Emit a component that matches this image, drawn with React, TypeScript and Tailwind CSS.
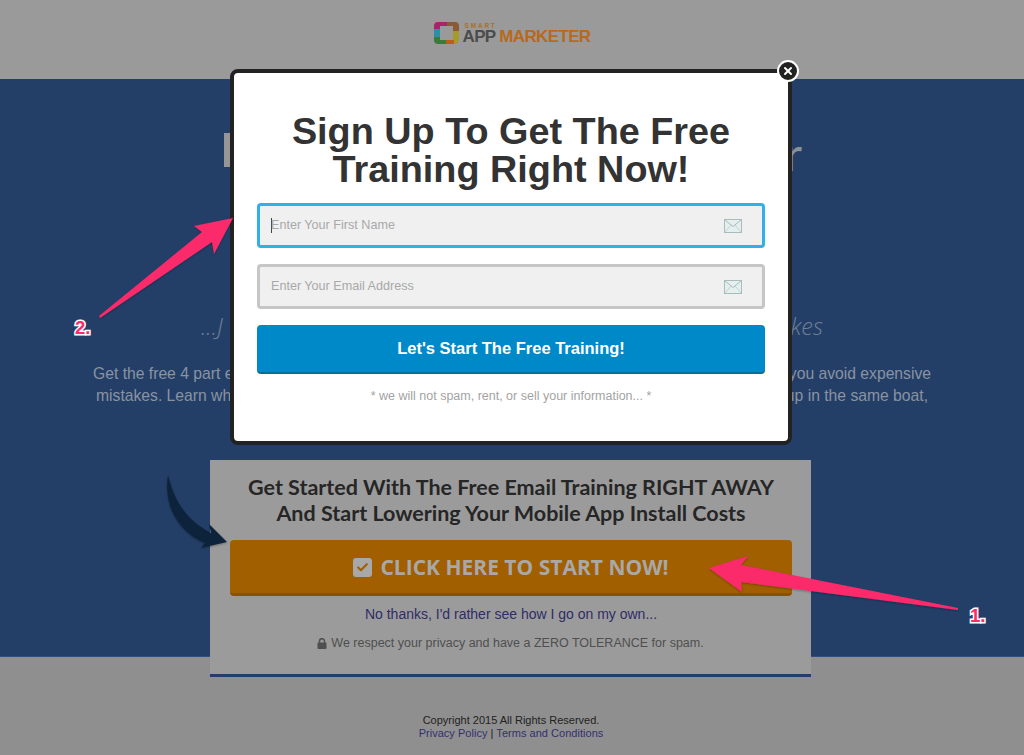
import { Check, X } from 'lucide-react'

function MailIcon() {
  return (
    <svg width="18" height="14" viewBox="0 0 18 14" className="shrink-0">
      <rect x="0.5" y="0.5" width="17" height="13" fill="#e4efee" stroke="#a9bcbc" />
      <path d="M1 1l8 6.5L17 1" fill="none" stroke="#a9bcbc" />
      <path d="M1 13l6-7M17 13l-6-7" fill="none" stroke="#c3d2d2" />
    </svg>
  )
}

function LockIcon() {
  return (
    <svg width="10" height="11" viewBox="0 0 10 11" className="shrink-0">
      <path d="M2.5 5V3.2a2.5 2.5 0 0 1 5 0V5" fill="none" stroke="#4f4f4f" strokeWidth="1.5" />
      <rect x="0.5" y="4.5" width="9" height="6.5" rx="1" fill="#4f4f4f" />
    </svg>
  )
}

function Logo() {
  return (
    <div className="flex items-end gap-[4px]">
      <svg width="25" height="22" viewBox="0 0 25 22">
        <path d="M4 0h9v4H6v3H0V4a4 4 0 0 1 4-4z" fill="#a5246a" />
        <path d="M13 0h8a4 4 0 0 1 4 4v5h-6V4h-6z" fill="#8a5a34" />
        <path d="M0 7h6v8H0z" fill="#2b8fa8" />
        <path d="M0 15h6v3h6v4H4a4 4 0 0 1-4-4z" fill="#3c7a3c" />
        <path d="M19 9h6v9a4 4 0 0 1-4 4h-9v-4h7z" fill="#a79a2a" />
        <path d="M12 18h8v4h-8z" fill="#b8601a" />
      </svg>
      <div className="flex flex-col font-['Liberation_Sans',sans-serif]">
        <span className="text-[6.5px] leading-[7px] tracking-[1.8px] text-[#ad6f23] pl-[2px] font-bold">SMART</span>
        <span className="text-[17px] leading-[15px] font-bold tracking-[-0.65px] whitespace-nowrap">
          <span className="text-[#4c4c4c]">APP </span>
          <span className="text-[#b8691a]">MARKETER</span>
        </span>
      </div>
    </div>
  )
}

function Field({ placeholder, active }: { placeholder: string; active?: boolean }) {
  return (
    <div
      className={`h-[45px] flex items-center justify-between pl-[11px] pr-[20px] rounded-[4px] border-[3px] bg-[#f0f0f0] ${
        active ? 'border-[#2fb0ea]' : 'border-[#c6c6c6]'
      }`}
    >
      <span className="flex items-center text-[12.6px] text-[#a8a8a8]">
        {active && <span className="w-px h-[15px] bg-[#444] -mr-px" />}
        {placeholder}
      </span>
      <MailIcon />
    </div>
  )
}

function SignupModal() {
  return (
    <div className="absolute left-[230px] top-[69px] w-[562px] h-[376px] bg-white border-[4px] border-[#222] rounded-[8px] px-[23px] pt-[39px] font-['Liberation_Sans',sans-serif]">
      <h2 className="text-center font-bold text-[37.8px] leading-[38px] text-[#333] mb-[15px]">
        Sign Up To Get The Free
        <br />
        Training Right Now!
      </h2>
      <div className="flex flex-col gap-[16px]">
        <Field placeholder="Enter Your First Name" active />
        <Field placeholder="Enter Your Email Address" />
        <button className="h-[49px] rounded-[4px] bg-[#0089c9] border-b-[2px] border-[#00709f] text-white font-bold text-[16.5px]">
          Let's Start The Free Training!
        </button>
      </div>
      <p className="mt-[13px] text-center text-[12.5px] text-[#a3a3a3]">* we will not spam, rent, or sell your information... *</p>
      <div className="absolute -right-[11px] -top-[13px] w-[22px] h-[22px] rounded-full bg-[#222] border-[2px] border-white flex items-center justify-center">
        <X size={12} strokeWidth={4} className="text-white" />
      </div>
    </div>
  )
}

function Annotations() {
  return (
    <svg className="absolute left-0 top-0 pointer-events-none" width="1024" height="755" viewBox="0 0 1024 755">
      <defs>
        <filter id="sh" x="-10%" y="-10%" width="120%" height="130%">
          <feDropShadow dx="0" dy="1" stdDeviation="1" floodColor="#000" floodOpacity="0.3" />
        </filter>
      </defs>
      <path filter="url(#sh)" d="M168 475C163 505 178 532 205 543L201 548L227 542L209 524L211 533C190 522 175 505 168 475z" fill="#10243a" />
      <path filter="url(#sh)" d="M709 568L748 556L741 565L958 608L958 610L741 582L742 592z" fill="#fb2a6b" />
      <path filter="url(#sh)" d="M233 218L194 226L202 232L99 316L100 318L212 242L214 254z" fill="#fb2a6b" />
      <text x="75" y="334" fontFamily="'Liberation Sans',sans-serif" fontWeight="700" fontSize="18.5" fill="#fb2a6b" stroke="#fff" strokeWidth="3" paintOrder="stroke">2.</text>
      <text x="970" y="622" fontFamily="'Liberation Sans',sans-serif" fontWeight="700" fontSize="18.5" fill="#fb2a6b" stroke="#fff" strokeWidth="3" paintOrder="stroke">1.</text>
    </svg>
  )
}

export default function App() {
  return (
    <div className="relative w-[1024px] h-[755px] overflow-hidden bg-[#8f8f8f] font-['Liberation_Sans',sans-serif]">
      <header className="h-[79px] bg-[#9a9a9a] flex justify-center pt-[22px]">
        <div className="h-[23px]">
          <Logo />
        </div>
      </header>

      <main className="h-[578px] bg-[#233f68] border-b border-[#2f4f7c] flex flex-col items-center">
        {/* only the edges of these lines show beside the popup */}
        <div className="mt-[54px] ml-[2px] w-[578px] flex justify-between text-[#8c9098] font-['Lato',sans-serif] text-[46px] leading-[42px]">
          <span className="w-[6px] h-[34px] bg-[#969696]" />
          <span>r</span>
        </div>
        <div className="mt-[137px] w-[622px] flex justify-between italic font-light text-[#6f7e95] font-['Open_Sans',sans-serif] text-[23.5px] leading-[28px]">
          <span>...J</span>
          <span>kes</span>
        </div>
        <div className="mt-[23px] w-[838px] flex justify-between text-[#8a93a1] text-[15.7px] leading-[22px]">
          <span>Get the free 4 part e</span>
          <span>you avoid expensive</span>
        </div>
        <div className="w-[832px] flex justify-between text-[#8a93a1] text-[15.7px] leading-[22px]">
          <span>mistakes. Learn wh</span>
          <span>up in the same boat,</span>
        </div>
      </main>

      <section className="absolute left-[210px] top-[460px] w-[601px] h-[217px] bg-[#9b9b9b] border-b-[3px] border-[#233f68] pl-[20px] pr-[19px] pt-[14px] flex flex-col items-center">
        <h3 className="text-center font-['Lato',sans-serif] font-bold text-[21.5px] leading-[26px] text-[#262626]">
          Get Started With The Free Email Training RIGHT AWAY
          <br />
          And Start Lowering Your Mobile App Install Costs
        </h3>
        <button className="mt-[14px] w-full h-[56px] shrink-0 rounded-[4px] pt-[2px] bg-[#a15f00] border-b-[3px] border-[#8a5200] flex items-center justify-center gap-[8px] font-['Open_Sans',sans-serif] font-bold text-[21px] text-[#a8a8a8]">
          <span className="w-[19px] h-[19px] rounded-[3px] bg-[#a8a8a8] flex items-center justify-center">
            <Check size={13} strokeWidth={4} className="text-[#a15f00]" />
          </span>
          CLICK HERE TO START NOW!
        </button>
        <a className="mt-[9px] text-[14px] leading-[18px] text-[#2f2c66]">No thanks, I'd rather see how I go on my own...</a>
        <p className="mt-[11px] -ml-[1px] flex items-center gap-[4px] text-[12.5px] leading-[18px] text-[#4f4f4f]">
          <LockIcon />
          We respect your privacy and have a ZERO TOLERANCE for spam.
        </p>
      </section>

      <footer className="absolute left-0 right-0 top-[714px] -ml-[2px] text-center text-[11px] leading-[13px] text-[#222]">
        <div>Copyright 2015 All Rights Reserved.</div>
        <div className="text-[#33306e] tracking-[0.03px]">
          Privacy Policy <span className="text-[#222]">|</span> Terms and Conditions
        </div>
      </footer>

      <SignupModal />
      <Annotations />
    </div>
  )
}
